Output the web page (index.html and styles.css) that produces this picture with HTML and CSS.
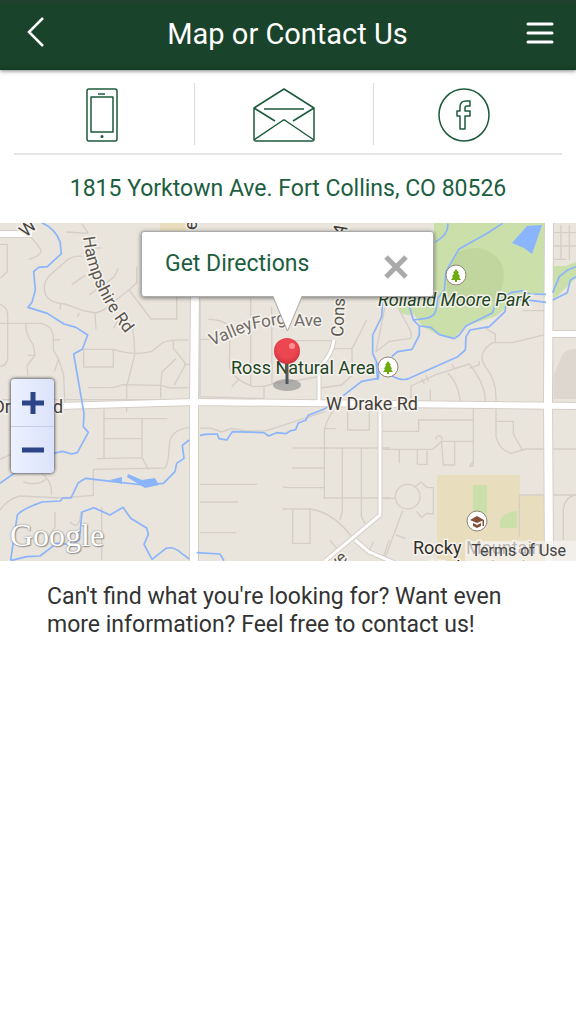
FILE: index.html
```html
<!DOCTYPE html>
<html lang="en">
<head>
<meta charset="utf-8">
<meta name="viewport" content="width=device-width, initial-scale=1">
<title>Map or Contact Us</title>
<link rel="stylesheet" href="styles.css">
</head>
<body>
<header class="topbar">
  <button class="bar-button" type="button" aria-label="Back">
    <svg width="18" height="32" viewBox="0 0 18 32"><path class="bar-line" d="M16 1 2 15 16 29"/></svg>
  </button>
  <h1 class="title">Map or Contact Us</h1>
  <button class="bar-button" type="button" aria-label="Menu">
    <svg width="28" height="24" viewBox="0 0 28 24"><path class="menu-line" d="M2 3H26M2 12H26M2 21H26"/></svg>
  </button>
</header>
<main>
  <nav class="contacts">
    <a class="contact" href="#call" aria-label="Call">
      <svg class="icon" width="36" height="60" viewBox="0 0 36 60"><rect x="1" y="5" width="30" height="52" rx="2"/><rect x="5" y="13" width="22" height="35"/><path d="M12 10H19"/><circle cx="16" cy="52.500" r=".8"/></svg>
    </a>
    <a class="contact" href="#email" aria-label="Email">
      <svg class="icon" width="64" height="60" viewBox="0 0 64 60"><path d="M2 24 32 5 62 24V55Q62 57 60 57H4Q2 57 2 55ZM2 24 23 37M62 24 41 37M2 56 30 37Q32 35 34 37L62 56M12 25H52"/></svg>
    </a>
    <a class="contact" href="#facebook" aria-label="Facebook">
      <svg class="icon" width="54" height="60" viewBox="0 0 54 60"><ellipse cx="27" cy="31" rx="25" ry="26"/><path d="M33 17H29Q23 17 23 23V27H20V32H23V45H28V32H33V27H28V24Q28 22 30 22H33Z"/></svg>
    </a>
  </nav>
  <p class="address"><a href="#address">1815 Yorktown Ave. Fort Collins, CO 80526</a></p>
  <section class="map" aria-label="Map">
    <svg class="map-art" viewBox="0 223 576 338">
      <rect class="land" y="223" width="576" height="338"/>
      <path class="sand" d="M160 223H186V232H160ZM437 475H520V561H437ZM520 495H545V561H520Z"/>
      <path class="park" d="M434 223H546V293L516 299 496 316 466 326 454 338 438 335 422 326 414 314Q400 318 396 305V290H434ZM473 485H487V515H473ZM500 528V521Q503 512 517 511V528ZM553 266H566L576 262V278L553 300Z"/>
      <path class="grove" d="M458 252Q480 242 497 257Q511 273 496 301Q474 307 449 299Q441 278 458 252Z"/>
      <path class="block" d="M561 358Q563 349 576 349V399H554V374Z"/>
      <g class="street" transform="translate(0 220) scale(.333333)">
        <path d="M0 73H22V155L0 175M66 30Q102 55 124 92Q120 109 86 118M245 10 265 40M200 36 265 40M248 109Q220 106 202 120L150 165Q124 192 137 225 150 250 195 252L250 272 286 279Q316 272 340 246L390 207 410 188V140M215 194 256 166M267 225 343 170 355 145M182 253 180 268M238 278 232 292M285 279 288 328M340 325 352 304M386 208 453 297H530V230M270 82 302 84M398 324Q404 370 404 405L380 500V576M0 310H122Q154 315 160 346V390L176 418 191 465 195 570M78 310Q74 340 100 375L105 405 81 438 84 467M105 406H84M176 418 163 455M160 362 180 358M0 253Q22 260 23 285V415Q20 438 0 439M251 388H340V441H251ZM340 388Q400 408 453 395L490 367Q514 358 565 360M520 362V385L555 428 554 438 522 496M554 433H568M528 416 486 456 482 496V535M265 503 340 502 370 494 482 496 512 504 565 503M0 539H565"/>
        <path d="M312 566V715M312 596H502M312 656H426M426 596V712L446 750M290 716 428 713M280 748 495 744Q506 730 508 675 510 630 568 622M280 748V826L184 834 58 828Q20 840 0 870M0 718 60 690M120 755Q160 785 154 825M70 786Q110 800 140 776M165 875V920L140 965M305 862V1020M210 906Q240 935 242 875"/>
      </g>
      <g class="street" transform="translate(190 220) scale(.333333)">
        <path d="M30 240V530L222 536V500M182 235V495M245 260 246 495M290 362H428M30 358H115M55 298Q110 298 120 330L118 438Q128 478 190 500 240 500 250 490L330 480 385 470M125 500 145 479M420 386H486V466L455 495 390 504M486 386 530 300"/>
        <path d="M30 624 65 625 95 636 125 625 170 633 230 632 405 575M430 572Q403 610 403 640V834H600M308 684H600M306 744H403M278 800 290 803H403M278 867H360Q435 878 492 960M308 868V970H360V868M457 686V875L450 900M514 686V890L530 918M30 793H202M30 846H144M30 938H138M473 570V630H538V570M405 626H438M550 965 535 1000M420 960 440 985M598 960 580 1010"/>
      </g>
      <g class="street" transform="translate(376 220) scale(.333333)">
        <path d="M30 245 0 395 40 364 105 355V335L70 270M510 272H440M510 343 410 368H350Q300 400 328 440 360 480 360 530V650Q370 690 405 700L450 687H600M325 322 358 343V365M105 560V498L180 464 280 432Q326 490 328 540V560M215 460Q250 490 254 560M163 508V560M136 476 145 490M150 466 158 484M227 433 235 445M280 445 310 434V424"/>
        <path d="M292 562V738H280L292 725M20 634H128V600H292M20 688H170L198 664H290M180 658A9 9 0 1 1 196 662L202 735H236V662M70 690V730M124 690V733H153V692M362 604H412V642L440 692M0 835H58M118 800 135 786 154 803H172V882L152 880 137 892 121 874M58 830A37 37 0 1 0 132 830A37 37 0 1 0 58 830M80 872 25 1020M60 945 90 956M430 950V825H600M562 960V870Q566 830 600 825M530 420V535M555 15V120M580 15V120M530 38H600M530 78H600M535 118H570"/>
      </g>
      <path class="road-edge" d="M0 234H32M58 406 195 402 576 406M549 334H576"/>
      <path class="road-edge main-edge" d="M195 290 194 402 194 561M549 223 548 400 549 561"/>
      <path class="road-edge side-edge" d="M334 340Q332 355 319 368V403M380 403V515L325 561M355 540 369 552 395 563"/>
      <path class="road" d="M0 234H32M58 406 195 402 576 406M549 334H576"/>
      <path class="road main-road" d="M195 290 194 402 194 561M549 223 548 400 549 561"/>
      <path class="road side-road" d="M334 340Q332 355 319 368V403M380 403V515L325 561M355 540 369 552 395 563"/>
      <g class="river">
        <path transform="translate(0 220) scale(.333333)" d="M125 8Q165 25 180 65L184 101 142 140 116 142 101 155 106 210 96 247 84 262 142 280 192 312 228 322 263 345 247 388 221 402 252 580 250 620 265 637 232 698 215 702 187 694 160 700M0 790 48 756M32 1020 52 885Q65 868 126 846L181 843 188 834H213L235 788 257 775 340 785 430 795 490 790 525 755 530 730 552 715 547 676 568 660M32 1022 80 1010 120 1008 170 970 215 974 238 960 246 876 282 863 330 885 369 862 392 895 440 924 445 943 432 973 456 1018 498 985Q520 978 545 1000L568 1017"/>
        <path transform="translate(190 220) scale(.333333)" d="M578 245 575 290 548 345V400L566 440 565 475 515 484 456 530 405 566 355 586 347 601 325 609 317 629 300 633 287 641 260 638 236 648 222 638 127 635 110 660 87 656 82 642 45 643 30 646M20 998 90 1002 102 1022"/>
        <path transform="translate(376 220) scale(.333333)" d="M380 10 330 42 248 88 210 155 205 210 185 235 180 270Q175 292 145 296L112 300 100 260M215 10Q220 42 178 66M112 300 130 318 165 322 190 344 235 356 250 345 270 318 350 278 358 250 405 218 442 212 460 222 510 223M130 318V345L108 388 65 395 47 410M48 468Q85 488 110 470L245 410 268 390 270 350 282 330 340 320 387 275 390 252 440 238 510 247M530 218 550 170 575 150 600 140M530 240 574 218 583 180 600 170M0 430 5 480"/>
      </g>
      <path class="water" d="M527 226 542 225 532 254 524 248 512 243ZM110 480 122 477V484ZM128 474 142 480 155 478 159 485 145 488 127 477Z"/>
      <g class="label">
        <path id="hampshire" fill="none" stroke="none" d="M83 237Q88 286 126 334"/>
        <text class="small-label"><textPath href="#hampshire">Hampshire Rd</textPath></text>
        <text class="small-label soft" transform="translate(212 346) rotate(-23)">Valley</text>
        <text class="small-label soft" transform="translate(253 329) rotate(-10)">Forg</text>
        <text class="small-label soft" x="294" y="326">Ave</text>
        <text class="small-label" transform="translate(343 337) rotate(-87)">Cons</text>
        <text transform="translate(26 238) rotate(-43)">W</text>
        <text transform="translate(197 230) rotate(-90)">e</text>
        <text transform="translate(342 238) rotate(-60)">A</text>
        <text class="small-label" transform="translate(335 570) rotate(-40)">ve</text>
        <text x="-7" y="413">Dr</text><text x="53" y="413">d</text>
        <text x="326" y="410">W Drake Rd</text>
        <text class="green-label" x="231" y="374">Ross Natural Area</text>
        <text class="green-label italic" x="378" y="306">Rolland Moore Park</text>
        <text class="dark-label" x="413" y="554">Rocky Mountain</text>
        <text class="dark-label" x="429" y="574">High School</text>
      </g>
      <g class="poi"><circle cx="456" cy="275" r="10"/><circle cx="388" cy="367" r="10"/><circle cx="477" cy="521" r="10"/></g>
      <path class="tree" d="M456 269 459 273H458L460 277H459L461 280H457V282H455V280H451L453 277H452L454 273H453ZM388 361 391 365H390L392 369H391L393 372H389V374H387V372H383L385 369H384L386 365H385Z"/>
      <path class="school" d="M470 520 477 516 484 520 477 523ZM473 523 477 525 481 523V526L477 528 473 526ZM482.500 520H484V526H482.500Z"/>
      <defs>
        <radialGradient id="ball" cx=".5" cy=".4" r=".6"><stop offset=".6" stop-color="#ec4650"/><stop offset="1" stop-color="#ce3440"/></radialGradient>
      </defs>
      <ellipse class="pin-shadow" cx="287" cy="385" rx="14" ry="6"/>
      <path class="pin-stem" d="M287 363V384"/>
      <circle cx="287" cy="351" r="13" fill="url(#ball)"/><circle class="pin-shine" cx="292" cy="346" r="3"/>
    </svg>
    <span class="brand">Google</span>
    <a class="terms" href="#terms">Terms of Use</a>
    <div class="zoom">
      <button class="zoom-button" type="button" aria-label="Zoom in"><svg width="22" height="22" viewBox="0 0 22 22"><path d="M0 11H22M11 0V22"/></svg></button>
      <button class="zoom-button" type="button" aria-label="Zoom out"><svg width="22" height="22" viewBox="0 0 22 22"><path d="M0 11H22"/></svg></button>
    </div>
    <div class="callout">
      <a class="directions" href="#directions">Get Directions</a>
      <button class="close" type="button" aria-label="Close"><svg width="24" height="24" viewBox="0 0 24 24"><path d="M2 2 22 22M22 2 2 22"/></svg></button>
      <svg class="tail" width="32" height="38" viewBox="0 0 32 38"><path class="tail-fill" d="M1 0 15.500 36 30 0Z"/><path class="tail-line" d="M1 2 15.500 36 30 2"/></svg>
    </div>
  </section>
  <p class="note">Can't find what you're looking for? Want even more information? Feel free to contact us!</p>
</main>
</body>
</html>
```
FILE: styles.css
```css
* { box-sizing: border-box; }
body {
  margin: 0;
  background: #fff;
  color: #333;
  font-family: Roboto, "Liberation Sans", sans-serif;
}
h1, p { margin: 0; font-weight: 400; }
a { color: inherit; text-decoration: none; }
button { padding: 0; border: 0; background: none; }
svg { display: block; }

.topbar {
  display: flex;
  align-items: center;
  justify-content: space-between;
  height: 70px;
  padding: 0 22px 4px 27px;
  background: linear-gradient(#243f31, #19432a 5px, #19432a 66px, #143922);
  box-shadow: 0 1px 4px rgba(0, 0, 0, .5);
  color: #fff;
}
.title { padding: 1px 0 0 4px; font-size: 29px; line-height: 36px; }
.bar-line { fill: none; stroke: #fff; stroke-width: 2.500; }
.menu-line { stroke: #fff; stroke-width: 3; stroke-linecap: round; }

.contacts {
  display: grid;
  grid-template-columns: repeat(3, 1fr);
  margin: 0 14px;
  padding: 13px 9px 8px 0;
  border-bottom: 2px solid #e6e6e6;
}
.contact {
  display: flex;
  align-items: center;
  justify-content: center;
  height: 62px;
}
.contact + .contact { border-left: 1px solid #ddd; }
.icon { fill: none; stroke: #1d5a3b; stroke-width: 1.500; stroke-linejoin: round; }

.address {
  padding: 18px 0 19px;
  color: #1c5e40;
  font-size: 23px;
  line-height: 31px;
  text-align: center;
}

.map { position: relative; overflow: hidden; }
.map-art { width: 100%; height: auto; }
.land { fill: #e9e4dc; }
.sand { fill: #e8ddbd; }
.park { fill: #cadfaa; }
.grove { fill: #c1d69e; }
.block { fill: #ded7d0; }
.street { fill: none; stroke: #d5cec7; stroke-width: 4; stroke-linejoin: round; }
.road-edge { fill: none; stroke: #d5cec7; stroke-width: 8; }
.main-edge { stroke-width: 10; }
.side-edge { stroke-width: 5; }
.road { fill: none; stroke: #fff; stroke-width: 6; }
.main-road { stroke-width: 8; }
.side-road { stroke-width: 3; }
.river { fill: none; stroke: #8ab4fb; stroke-width: 5; stroke-linejoin: round; }
.water { fill: #8ab4fb; }
.label {
  fill: #454039;
  stroke: #f5f2ee;
  stroke-width: 3;
  paint-order: stroke;
  font-size: 18px;
}
.small-label { font-size: 17px; fill: #5a554d; }
.soft { fill: #706b64; }
.green-label { fill: #1d4523; }
.italic { font-style: italic; }
.dark-label { fill: #302c28; }
.poi { fill: #fff; stroke: #8d8778; stroke-width: 1; }
.tree { fill: #6eaa10; }
.school { fill: #855039; }
.pin-shadow { fill: #777; fill-opacity: .5; }
.pin-stem { stroke: #51585b; stroke-width: 3; }
.pin-shine { fill: #ff8f92; }

.brand {
  position: absolute;
  bottom: 8px;
  left: 10px;
  color: #fff;
  font-family: "Liberation Serif", serif;
  font-size: 32px;
  line-height: 36px;
  text-shadow: 0 0 2px #777, 1px 1px 1px #999;
}
.terms {
  position: absolute;
  right: 0;
  bottom: 0;
  padding: 0 10px 0 6px;
  background: rgba(245, 242, 238, .7);
  color: #444;
  font-size: 16px;
  line-height: 20px;
}
.zoom {
  position: absolute;
  top: 156px;
  left: 11px;
  width: 43px;
  border-radius: 4px;
  background: linear-gradient(90deg, #edf1ff, #dbe3fb);
  box-shadow: 0 0 3px 1px rgba(70, 70, 80, .8);
}
.zoom-button {
  display: flex;
  align-items: center;
  justify-content: center;
  width: 100%;
  height: 47px;
  stroke: #2c4488;
  stroke-width: 5;
}
.zoom-button + .zoom-button { border-top: 1px solid #c6cde8; }
.callout {
  position: absolute;
  top: 8px;
  left: 50%;
  display: flex;
  align-items: center;
  justify-content: space-between;
  width: 293px;
  height: 66px;
  margin-left: -147px;
  padding: 0 25px 0 23px;
  border: 1px solid #aaa;
  border-radius: 3px;
  background: #fff;
  box-shadow: 0 1px 4px rgba(0, 0, 0, .5);
}
.directions { color: #1c5e40; font-size: 23px; line-height: 32px; }
.close { padding-top: 5px; stroke: #aaa; stroke-width: 5; }
.tail { position: absolute; top: 63px; left: 130px; }
.tail-fill { fill: #fff; }
.tail-line { fill: none; stroke: #aaa; }

.note {
  padding: 22px 47px;
  font-size: 23px;
  line-height: 28px;
}
```
